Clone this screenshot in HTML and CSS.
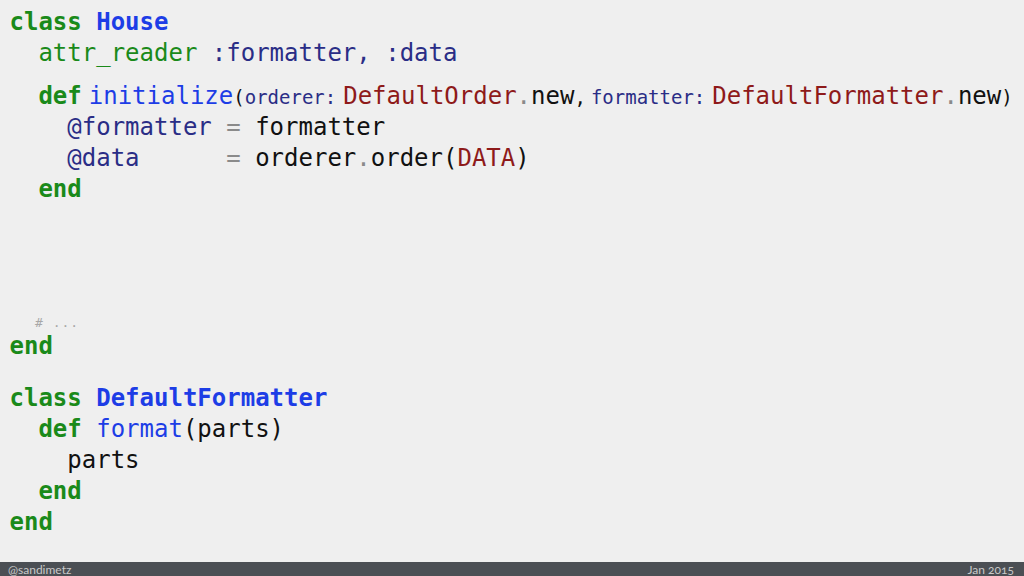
FILE: index.html
```html
<!DOCTYPE html>
<html>
<head>
<meta charset="utf-8">
<link rel="stylesheet" href="styles.css">
</head>
<body>
<div class="slide">
  <main class="code">
    <div class="block-a">
      <div class="line"><span class="kw">class</span> <span class="cls">House</span></div>
      <div class="line i1"><span class="fn-g">attr_reader</span> <span class="sym">:formatter, :data</span></div>
      <div class="line i1 gap"><span class="kw">def</span><span class="sp"></span><span class="meth">initialize</span><span class="sm"><span class="pl">(</span><span class="sym">orderer:</span></span><span class="sp"></span><span class="const">DefaultOrder</span><span class="dot">.</span><span class="pl">new</span><span class="sm"><span class="pl">,</span></span><span class="sp2"></span><span class="sm"><span class="sym">formatter:</span></span><span class="sp"></span><span class="const">DefaultFormatter</span><span class="dot">.</span><span class="pl">new</span><span class="sm"><span class="pl">)</span></span></div>
      <div class="line i2"><span class="sym">@formatter</span> <span class="dot">=</span> <span class="pl">formatter</span></div>
      <div class="line i2"><span class="sym">@data</span>      <span class="dot">=</span> <span class="pl">orderer</span><span class="dot">.</span><span class="pl">order(</span><span class="const">DATA</span><span class="pl">)</span></div>
      <div class="line i1"><span class="kw">end</span></div>
    </div>
    <div class="comment">#&nbsp;...</div>
    <div class="line"><span class="kw">end</span></div>
    <div class="block-b">
      <div class="line"><span class="kw">class</span> <span class="cls">DefaultFormatter</span></div>
      <div class="line i1"><span class="kw">def</span> <span class="meth">format</span><span class="pl">(parts)</span></div>
      <div class="line i2"><span class="pl">parts</span></div>
      <div class="line i1"><span class="kw">end</span></div>
      <div class="line"><span class="kw">end</span></div>
    </div>
  </main>
  <footer class="footer">
    <span class="handle">@sandimetz</span>
    <span class="date">Jan 2015</span>
  </footer>
</div>
</body>
</html>
```

FILE: styles.css
```css
html, body {
  margin: 0;
  padding: 0;
}
body {
  background: #efefef;
  width: 1024px;
  height: 576px;
  overflow: hidden;
}
.slide {
  display: flex;
  flex-direction: column;
  height: 576px;
}
.code {
  flex: 1;
  padding: 7px 0 0 9.5px;
  font-family: "DejaVu Sans Mono", "Liberation Mono", monospace;
  font-size: 24px;
  color: #111;
}
.line {
  height: 31px;
  line-height: 31px;
  white-space: pre;
}
.i1 { padding-left: 28.9px; }
.i2 { padding-left: 57.8px; }
.gap { margin-top: 12px; }
.kw { color: #1a8a1a; font-weight: bold; }
.cls { color: #1d3de6; font-weight: bold; }
.fn-g { color: #1a8a1a; }
.meth { color: #1d3de6; }
.sym { color: #2a2d86; }
.const { color: #8e1a1a; }
.pl { color: #111; }
.dot { color: #8a8a8a; }
.sm {
  font-size: 19px;
  line-height: 1;
}
.sp {
  display: inline-block;
  width: 7px;
}
.sp2 {
  display: inline-block;
  width: 5px;
}
.comment {
  margin-top: 110px;
  padding-left: 25.5px;
  height: 16px;
  line-height: 16px;
  font-size: 13px;
  color: #a8a8a8;
  white-space: pre;
  letter-spacing: 1px;
}
.block-b {
  margin-top: 21px;
}
.footer {
  height: 14px;
  background: #4b4f54;
  display: flex;
  justify-content: space-between;
  align-items: center;
  padding: 0 10px 0 8px;
  font-family: Lato, "Open Sans", sans-serif;
  font-size: 12px;
  color: #c9c9c9;
  font-variant-numeric: oldstyle-nums;
}
```
